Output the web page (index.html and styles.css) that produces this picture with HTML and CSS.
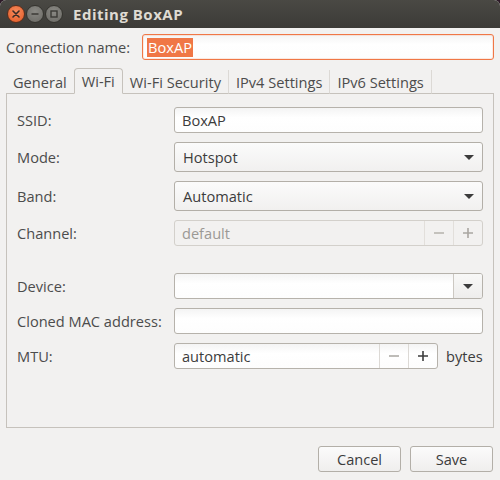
FILE: index.html
```html
<!DOCTYPE html>
<html>
<head>
<meta charset="utf-8">
<link rel="stylesheet" href="styles.css">
</head>
<body>
<div class="window">
  <div class="titlebar">
    <div class="wbtns">
      <span class="wbtn close"><svg width="8" height="8" viewBox="0 0 8 8"><path d="M1 1L7 7M7 1L1 7" stroke="#3a2c26" stroke-width="1.6" stroke-linecap="round"/></svg></span>
      <span class="wbtn"><svg width="8" height="8" viewBox="0 0 8 8"><path d="M0.5 4H7.5" stroke="#3b3a36" stroke-width="1.6"/></svg></span>
      <span class="wbtn"><svg width="8" height="8" viewBox="0 0 8 8"><rect x="1" y="1" width="6" height="6" fill="none" stroke="#3b3a36" stroke-width="1.4"/></svg></span>
    </div>
    <div class="title">Editing BoxAP</div>
  </div>
  <div class="content">
    <div class="name-row">
      <span class="label">Connection name:</span>
      <div class="entry focus"><span class="sel">BoxAP</span></div>
    </div>
    <div class="tabs">
      <div class="tab">General</div>
      <div class="tab active">Wi-Fi</div>
      <div class="tab">Wi-Fi Security</div>
      <div class="tab">IPv4 Settings</div>
      <div class="tab last">IPv6 Settings</div>
      <div class="tab-fill"></div>
    </div>
    <div class="panel">
      <div class="grid">
        <span class="label">SSID:</span>
        <div class="entry">BoxAP</div>

        <span class="label">Mode:</span>
        <div class="combo"><span>Hotspot</span><span class="arrow"></span></div>

        <span class="label">Band:</span>
        <div class="combo"><span>Automatic</span><span class="arrow"></span></div>

        <span class="label">Channel:</span>
        <div class="spin disabled">
          <span class="spin-text">default</span>
          <span class="sbtn"><svg width="12" height="12" viewBox="0 0 12 12"><path d="M1 6H11" stroke="#b5b2ad" stroke-width="1.6"/></svg></span>
          <span class="sbtn"><svg width="12" height="12" viewBox="0 0 12 12"><path d="M1 6H11M6 1V11" stroke="#a9a6a1" stroke-width="1.6"/></svg></span>
        </div>

        <div class="spacer"></div>

        <span class="label">Device:</span>
        <div class="spin">
          <span class="spin-text"></span>
          <span class="dbtn"><span class="arrow"></span></span>
        </div>

        <span class="label">Cloned MAC address:</span>
        <div class="entry"></div>

        <span class="label">MTU:</span>
        <div class="mtu-row">
          <div class="spin mtu">
            <span class="spin-text">automatic</span>
            <span class="sbtn"><svg width="12" height="12" viewBox="0 0 12 12"><path d="M1 6H11" stroke="#a9a6a1" stroke-width="1.6"/></svg></span>
            <span class="sbtn"><svg width="12" height="12" viewBox="0 0 12 12"><path d="M1 6H11M6 1V11" stroke="#3c3c3c" stroke-width="1.6"/></svg></span>
          </div>
          <span class="unit">bytes</span>
        </div>
      </div>
    </div>
    <div class="actions">
      <div class="btn">Cancel</div>
      <div class="btn">Save</div>
    </div>
  </div>
</div>
</body>
</html>
```
FILE: styles.css
```css
html, body {
  margin: 0;
  padding: 0;
  background: #2d1b28;
}
body {
  width: 500px;
  height: 480px;
  overflow: hidden;
  font-family: "Open Sans", "Noto Sans", sans-serif;
  font-size: 14.6px;
  color: #4c4c4c;
}
.window {
  width: 500px;
  height: 480px;
  background: #f2f1f0;
  border-radius: 6px 6px 0 0;
  overflow: hidden;
  display: flex;
  flex-direction: column;
}
.titlebar {
  height: 28px;
  background: linear-gradient(#4a4944, #3c3b37);
  display: flex;
  align-items: center;
  flex-shrink: 0;
}
.wbtns {
  display: flex;
  gap: 1px;
  padding-left: 7px;
  align-items: center;
}
.wbtn {
  width: 16px;
  height: 16px;
  border-radius: 50%;
  background: radial-gradient(circle at 50% 35%, #8a8984, #6a6964);
  border: 1px solid #35342f;
  display: flex;
  align-items: center;
  justify-content: center;
}
.wbtn.close {
  background: radial-gradient(circle at 50% 35%, #f68a5c, #e25a25);
  border-color: #5a2f1e;
}
.title {
  margin-left: 10px;
  color: #dfdbd2;
  font-weight: bold;
  font-size: 15px;
  letter-spacing: 0.5px;
}
.content {
  flex: 1;
  padding: 6px 6px 8px 6px;
  display: flex;
  flex-direction: column;
}
.name-row {
  display: flex;
  align-items: center;
  gap: 12px;
}
.name-row .entry {
  flex: 1;
}
.label {
  color: #4c4c4c;
  white-space: nowrap;
}
.entry {
  height: 26px;
  box-sizing: border-box;
  border: 1px solid #b6b2ab;
  border-radius: 3px;
  background: linear-gradient(#f4f4f4, #ffffff 40%, #fdfdfd);
  padding: 0 7px;
  display: flex;
  align-items: center;
  color: #3c3c3c;
}
.entry.focus {
  border-color: #f07746;
  box-shadow: inset 0 0 0 1px rgba(240,119,70,0.15);
  padding-left: 4px;
}
.sel {
  background: #f07746;
  color: #ffffff;
  padding: 0 1px;
  line-height: 19px;
}
.tabs {
  display: flex;
  margin-top: 8px;
  height: 26px;
  align-items: flex-end;
}
.tab {
  height: 24px;
  box-sizing: border-box;
  padding: 0 7px;
  display: flex;
  align-items: center;
  border-right: 1px solid #dcd9d5;
  border-bottom: 1px solid #c6c2bc;
  white-space: nowrap;
}
.tab.active {
  height: 26px;
  border: 1px solid #c6c2bc;
  border-bottom: 1px solid #f2f1f0;
  border-radius: 4px 4px 0 0;
  background: #f2f1f0;
  margin-left: -1px;
}
.tab-fill {
  flex: 1;
  height: 24px;
  border-bottom: 1px solid #c6c2bc;
  box-sizing: border-box;
}
.panel {
  height: 334px;
  box-sizing: border-box;
  border: 1px solid #c6c2bc;
  border-top: none;
  padding: 13px 11px 0 10px;
}
.grid {
  display: grid;
  grid-template-columns: 157px 1fr;
  row-gap: 9px;
  align-items: center;
}
.spacer {
  grid-column: 1 / span 2;
  height: 9px;
}
.combo {
  height: 30px;
  box-sizing: border-box;
  border: 1px solid #b3afa8;
  border-radius: 3px;
  background: linear-gradient(#fbfbfb, #f1f0ef);
  display: flex;
  align-items: center;
  justify-content: space-between;
  padding: 0 8px 0 8px;
  color: #3c3c3c;
}
.arrow {
  width: 0;
  height: 0;
  border-left: 5px solid transparent;
  border-right: 5px solid transparent;
  border-top: 5px solid #3c3c3c;
}
.spin {
  height: 26px;
  box-sizing: border-box;
  border: 1px solid #b6b2ab;
  border-radius: 3px;
  background: linear-gradient(#f4f4f4, #ffffff 40%, #fdfdfd);
  display: flex;
  align-items: stretch;
  overflow: hidden;
  color: #3c3c3c;
}
.spin-text {
  flex: 1;
  padding-left: 7px;
  display: flex;
  align-items: center;
}
.spin.disabled {
  background: #f2f1f0;
  border-color: #d3d0cb;
  color: #9b9995;
}
.sbtn {
  width: 28px;
  border-left: 1px solid #dcd9d5;
  display: flex;
  align-items: center;
  justify-content: center;
}
.spin.disabled .sbtn {
  border-left-color: #e2dfdb;
}
.dbtn {
  width: 28px;
  border-left: 1px solid #ccc8c2;
  background: linear-gradient(#f8f8f7, #eeedec);
  display: flex;
  align-items: center;
  justify-content: center;
}
.mtu-row {
  display: flex;
  align-items: center;
  gap: 8px;
}
.spin.mtu {
  width: 264px;
}
.unit {
  color: #3c3c3c;
}
.actions {
  display: flex;
  justify-content: flex-end;
  gap: 9px;
  margin-top: 18px;
  padding-right: 1px;
}
.btn {
  width: 83px;
  height: 26px;
  box-sizing: border-box;
  border: 1px solid #b3afa8;
  border-radius: 3px;
  background: linear-gradient(#fbfbfb, #efeeed);
  display: flex;
  align-items: center;
  justify-content: center;
  color: #3c3c3c;
}
```
